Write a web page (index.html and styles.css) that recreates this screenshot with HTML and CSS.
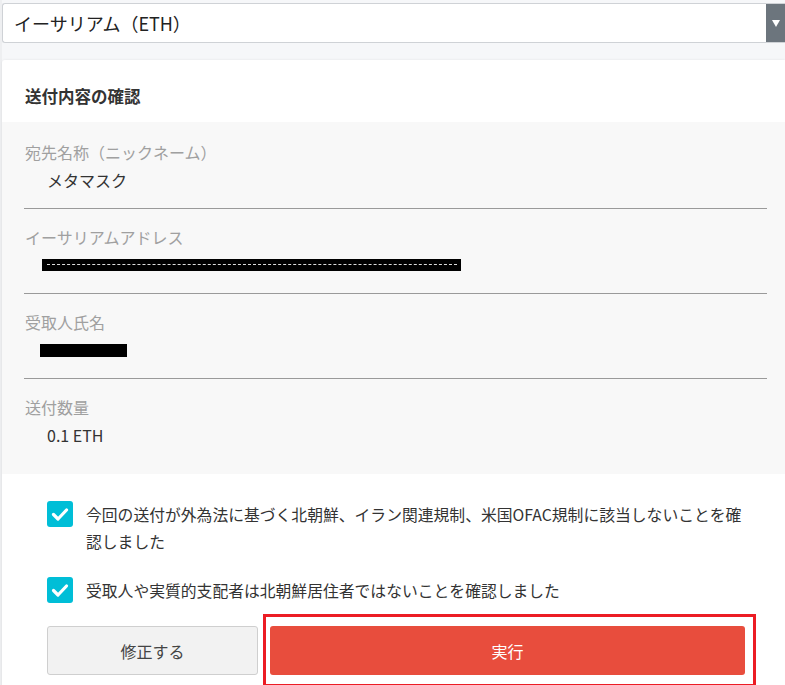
FILE: index.html
```html
<!DOCTYPE html>
<html lang="ja">
<head>
<meta charset="utf-8">
<title>送付内容の確認</title>
<link rel="stylesheet" href="styles.css">
</head>
<body>
<div class="page">
  <div class="select">
    <span class="select-text">イーサリアム（ETH）</span>
    <span class="select-arrow"><span class="tri"></span></span>
  </div>

  <section class="card">
    <h2 class="card-title">送付内容の確認</h2>

    <div class="details">
      <div class="item">
        <div class="label">宛先名称（ニックネーム）</div>
        <div class="value">メタマスク</div>
      </div>
      <div class="item">
        <div class="label">イーサリアムアドレス</div>
        <div class="value"><span class="redact redact-addr" aria-label="非表示"></span></div>
      </div>
      <div class="item">
        <div class="label">受取人氏名</div>
        <div class="value"><span class="redact redact-name" aria-label="非表示"></span></div>
      </div>
      <div class="item">
        <div class="label">送付数量</div>
        <div class="value">0.1 ETH</div>
      </div>
    </div>

    <div class="confirm">
      <label class="check-row">
        <span class="checkbox"><svg viewBox="0 0 26 26" width="26" height="26"><path d="M6.5 13.5 L11 18 L19.5 9" fill="none" stroke="#fff" stroke-width="3.2" stroke-linecap="round" stroke-linejoin="round"/></svg></span>
        <span class="check-text">今回の送付が外為法に基づく北朝鮮、イラン関連規制、米国OFAC規制に該当しないことを確認しました</span>
      </label>
      <label class="check-row">
        <span class="checkbox"><svg viewBox="0 0 26 26" width="26" height="26"><path d="M6.5 13.5 L11 18 L19.5 9" fill="none" stroke="#fff" stroke-width="3.2" stroke-linecap="round" stroke-linejoin="round"/></svg></span>
        <span class="check-text">受取人や実質的支配者は北朝鮮居住者ではないことを確認しました</span>
      </label>

      <div class="buttons">
        <button class="btn btn-edit">修正する</button>
        <div class="exec-wrap">
          <button class="btn btn-exec">実行</button>
          <span class="highlight"></span>
        </div>
      </div>
    </div>
  </section>
</div>
</body>
</html>
```

FILE: styles.css
```css
html, body {
  margin: 0;
  padding: 0;
}
body {
  background: #eeeff1;
  font-family: "Noto Sans CJK JP", "Noto Sans", sans-serif;
  color: #333;
  overflow: hidden;
}
.page {
  background: #f6f7f9;
  margin-left: 2px;
  padding-top: 3px;
  min-height: 685px;
  box-sizing: border-box;
}
.select {
  display: flex;
  align-items: stretch;
  height: 40px;
  box-sizing: border-box;
  border: 1px solid #cfd2d6;
  border-right: none;
  border-radius: 3px 0 0 3px;
  background: #fff;
}
.select-text {
  flex: 1;
  display: flex;
  align-items: center;
  padding-left: 11px;
  font-size: 18px;
  color: #222;
}
.select-arrow {
  width: 19px;
  background: #6c757d;
  display: flex;
  align-items: center;
  justify-content: center;
}
.tri {
  width: 0;
  height: 0;
  border-left: 4px solid transparent;
  border-right: 4px solid transparent;
  border-top: 7px solid #fff;
  margin-top: 1px;
}
.card {
  margin-top: 17px;
  background: #fff;
  border-radius: 3px 0 0 0;
  box-shadow: 0 0 3px rgba(0, 0, 0, 0.08);
  min-height: 626px;
}
.card-title {
  margin: 0;
  height: 62px;
  box-sizing: border-box;
  padding: 24px 0 0 23px;
  font-size: 16.5px;
  line-height: 24px;
  font-weight: bold;
  color: #333;
}
.details {
  background: #f8f8f8;
  padding: 2px 18px 27px 22px;
}
.item {
  padding-top: 16px;
  padding-bottom: 16px;
  border-bottom: 1px solid #9a9a9a;
}
.item:last-child {
  border-bottom: none;
  padding-bottom: 0;
}
.label {
  font-size: 16px;
  line-height: 24px;
  color: #a0a0a0;
  padding-left: 1px;
}
.value {
  margin-top: 4px;
  font-size: 16px;
  line-height: 24px;
  color: #333;
  padding-left: 23px;
  height: 24px;
  display: flex;
  align-items: center;
}
.redact {
  display: block;
  background: #000;
  position: relative;
}
.redact-addr {
  width: 419px;
  height: 12px;
  margin-left: -5px;
}
.redact-addr::after {
  content: "";
  position: absolute;
  left: 5px;
  right: 4px;
  top: 5px;
  border-top: 1px dashed #ddd;
}
.redact-name {
  width: 87px;
  height: 13px;
  margin-left: -7px;
}
.confirm {
  padding: 27px 40px 0 45px;
}
.check-row {
  display: flex;
  gap: 13px;
  align-items: flex-start;
  margin-bottom: 22px;
}
.checkbox {
  flex: none;
  width: 26px;
  height: 26px;
  border-radius: 3px;
  background: #00bed7;
  display: block;
}
.checkbox svg {
  display: block;
}
.check-text {
  font-size: 15.8px;
  line-height: 27px;
  color: #333;
}
.buttons {
  display: grid;
  grid-template-columns: 211px 1fr;
  gap: 12px;
  margin-top: 0;
}
.btn {
  height: 49px;
  border-radius: 3px;
  font-family: inherit;
  font-size: 16px;
  cursor: pointer;
}
.btn-edit {
  background: #f2f2f2;
  border: 1px solid #cfcfcf;
  color: #444;
}
.exec-wrap {
  position: relative;
}
.btn-exec {
  width: 100%;
  background: #e84d3d;
  border: none;
  color: #fff;
}
.highlight {
  position: absolute;
  left: -7px;
  right: -11px;
  top: -12px;
  height: 73px;
  box-sizing: border-box;
  border: 3px solid #ec1c24;
  pointer-events: none;
}
```
